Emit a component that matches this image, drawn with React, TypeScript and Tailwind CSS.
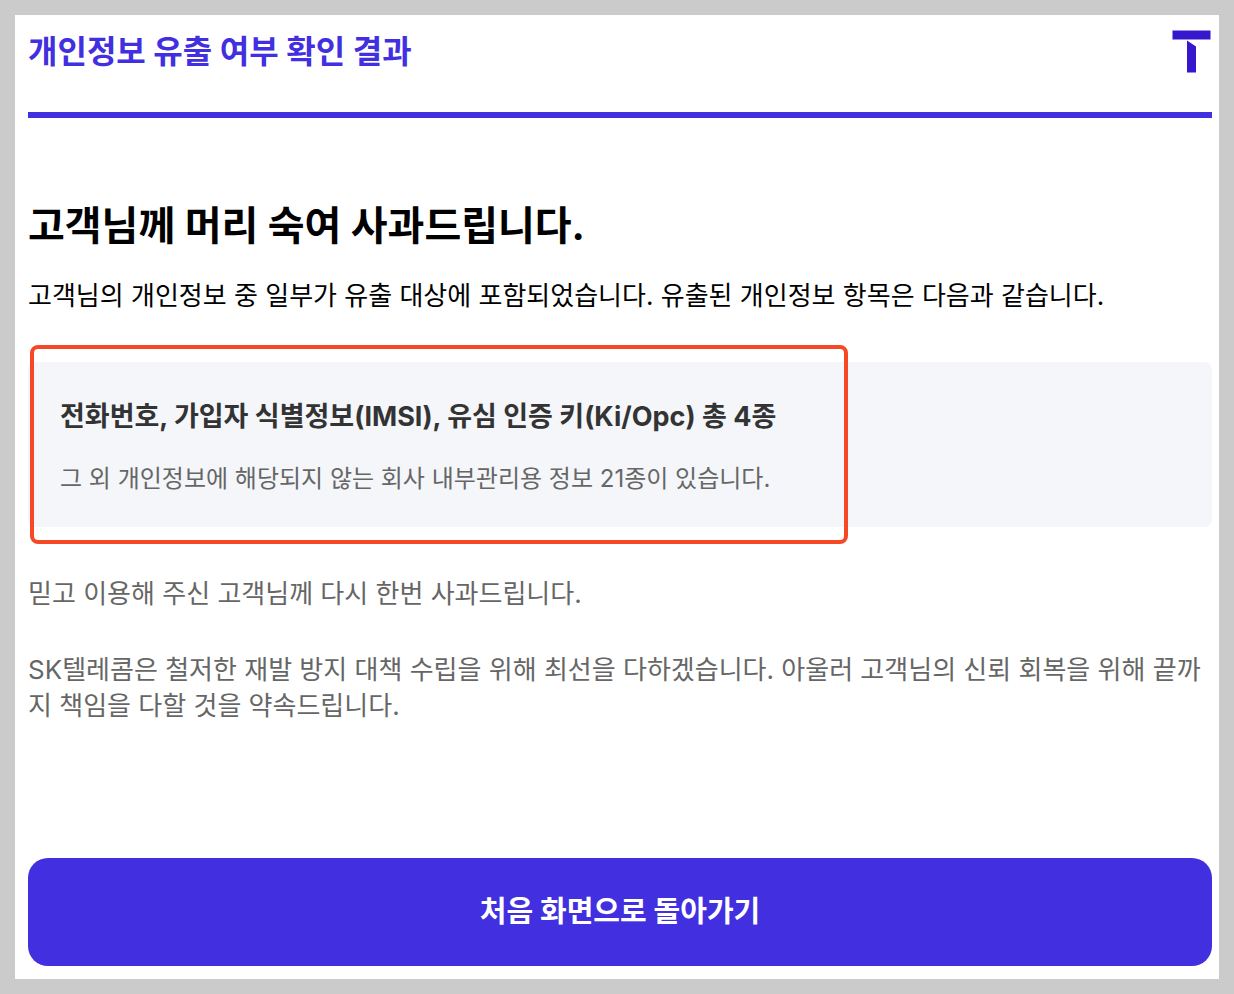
function Logo() {
  return (
    <svg className="h-11 w-10" viewBox="0 0 40 44" fill="#3617ce" role="img" aria-label="T">
      <path d="M0.5 1.5h38v9h-38z" />
      <path d="M15 11.5l9 6v26h-9z" />
    </svg>
  );
}

export default function App() {
  return (
    <div className="flex min-h-screen bg-[#cbcbcb] p-[15px] font-['Inter','Noto_Sans_CJK_KR',sans-serif]">
      <main className="flex w-full flex-col bg-white pr-[7px] pb-[13px] pl-[13px]">
        {/* Header */}
        <header className="flex items-start justify-between border-b-6 border-[#412fe0] pt-3.5 pb-[38px]">
          <h1 className="text-[32px] leading-[45px] font-bold text-[#412fe0]">개인정보 유출 여부 확인 결과</h1>
          <Logo />
        </header>

        <h2 className="mt-20 text-[40px] leading-[56px] font-bold text-black">고객님께 머리 숙여 사과드립니다.</h2>
        <p className="mt-6 text-[26px] leading-9 text-black">
          고객님의 개인정보 중 일부가 유출 대상에 포함되었습니다. 유출된 개인정보 항목은 다음과 같습니다.
        </p>

        {/* Leaked items */}
        <section className="relative mt-12 rounded-lg bg-[#f4f6fa] px-8 pt-[37px] pb-[30px]">
          <h3 className="text-[27px] leading-9 font-bold text-[#333]">
            전화번호, 가입자 식별정보(IMSI), 유심 인증 키(Ki/Opc) 총 4종
          </h3>
          <p className="mt-[26px] text-2xl leading-9 text-[#666]">
            그 외 개인정보에 해당되지 않는 회사 내부관리용 정보 21종이 있습니다.
          </p>
          <div className="absolute -inset-y-[17px] left-0.5 w-[818px] max-w-full rounded-lg border-4 border-[#f64826]" />
        </section>

        <div className="mt-[49px] text-[26px] leading-9 text-[#666]">
          <p>믿고 이용해 주신 고객님께 다시 한번 사과드립니다.</p>
          <p className="mt-10 break-all">
            SK텔레콤은 철저한 재발 방지 대책 수립을 위해 최선을 다하겠습니다. 아울러 고객님의 신뢰 회복을 위해 끝까지 책임을 다할 것을 약속드립니다.
          </p>
        </div>

        <button type="button" className="mt-auto h-[108px] w-full rounded-[20px] bg-[#412fe0] text-[29px] font-bold text-white">
          처음 화면으로 돌아가기
        </button>
      </main>
    </div>
  );
}
